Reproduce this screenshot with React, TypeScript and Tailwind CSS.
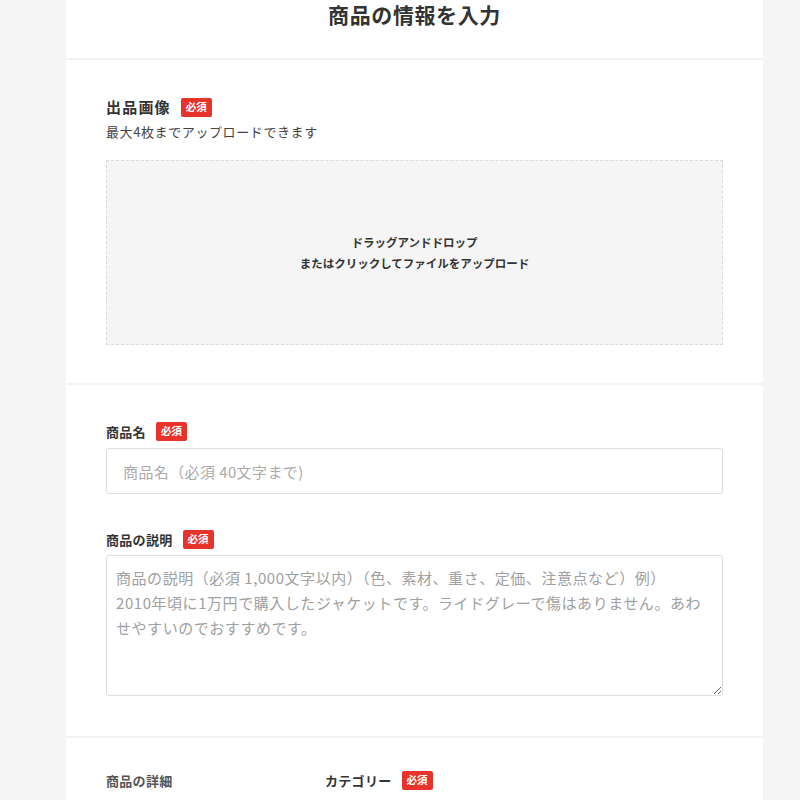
import React from "react";

const font = { fontFamily: '"Noto Sans CJK JP", "Noto Sans", sans-serif' };

function Badge() {
  return (
    <span className="ml-[10px] inline-flex h-[19px] w-[31px] items-center justify-center rounded-[2px] bg-[#e8332b] text-[10.5px] font-bold leading-none text-white">
      必須
    </span>
  );
}

export default function App() {
  return (
    <div className="min-h-[800px] w-[800px] bg-[#f5f5f5]" style={font}>
      <div className="ml-[66px] min-h-[800px] w-[697px] bg-white text-[#333]">
        {/* header */}
        <div className="flex h-[60px] justify-center border-b-2 border-[#f3f3f3]">
          <h1 className="pt-[2px] text-[21px] font-bold leading-[24px] tracking-[0.6px] text-[#333]">
            商品の情報を入力
          </h1>
        </div>

        {/* images section */}
        <section className="border-b-2 border-[#f3f3f3] px-10 pb-[38px] pt-[37px]">
          <div className="flex items-center">
            <span className="text-[15px] font-bold leading-[20px] tracking-[1.2px]">出品画像</span>
            <Badge />
          </div>
          <p className="mt-[6px] text-[13px] leading-[18px] tracking-[0.6px] text-[#444]">
            最大4枚までアップロードできます
          </p>
          <div className="mt-[19px] flex h-[185px] flex-col items-center justify-center border border-dashed border-[#dcdcdc] bg-[#f5f5f5] text-[11.5px] font-bold leading-[21px] text-[#333]">
            <span>ドラッグアンドドロップ</span>
            <span>またはクリックしてファイルをアップロード</span>
          </div>
        </section>

        {/* name + description */}
        <section className="border-b-2 border-[#f3f3f3] px-10 pb-[40px] pt-[37px]">
          <div className="flex items-center">
            <span className="text-[13px] font-bold leading-[19px] tracking-[0.3px]">商品名</span>
            <Badge />
          </div>
          <input
            className="mt-[7px] block h-[46px] w-full rounded-[3px] border border-[#dedede] px-[16px] text-[15px] tracking-[0.4px] outline-none placeholder:text-[#aaa]"
            placeholder="商品名（必須 40文字まで)"
          />
          <div className="mt-[36px] flex items-center">
            <span className="text-[13px] font-bold leading-[19px] tracking-[0.3px]">商品の説明</span>
            <Badge />
          </div>
          <textarea
            className="mt-[6px] block h-[141px] w-full rounded-[3px] border border-[#dedede] pb-2 pl-[9px] pr-[2px] pt-[9px] text-[15px] leading-[25px] tracking-[0.55px] outline-none placeholder:text-[#a0a0a0]"
            placeholder={
              "商品の説明（必須 1,000文字以内）（色、素材、重さ、定価、注意点など）例）\n2010年頃に1万円で購入したジャケットです。ライドグレーで傷はありません。あわ\nせやすいのでおすすめです。"
            }
          />
        </section>

        {/* details */}
        <section className="grid grid-cols-[219px_1fr] px-10 pb-4 pt-[33px]">
          <div className="text-[13px] font-bold leading-[19px] tracking-[0.3px] text-[#555]">商品の詳細</div>
          <div className="flex items-center">
            <span className="text-[13px] font-bold leading-[19px] tracking-[0.3px]">カテゴリー</span>
            <Badge />
          </div>
        </section>
      </div>
    </div>
  );
}
